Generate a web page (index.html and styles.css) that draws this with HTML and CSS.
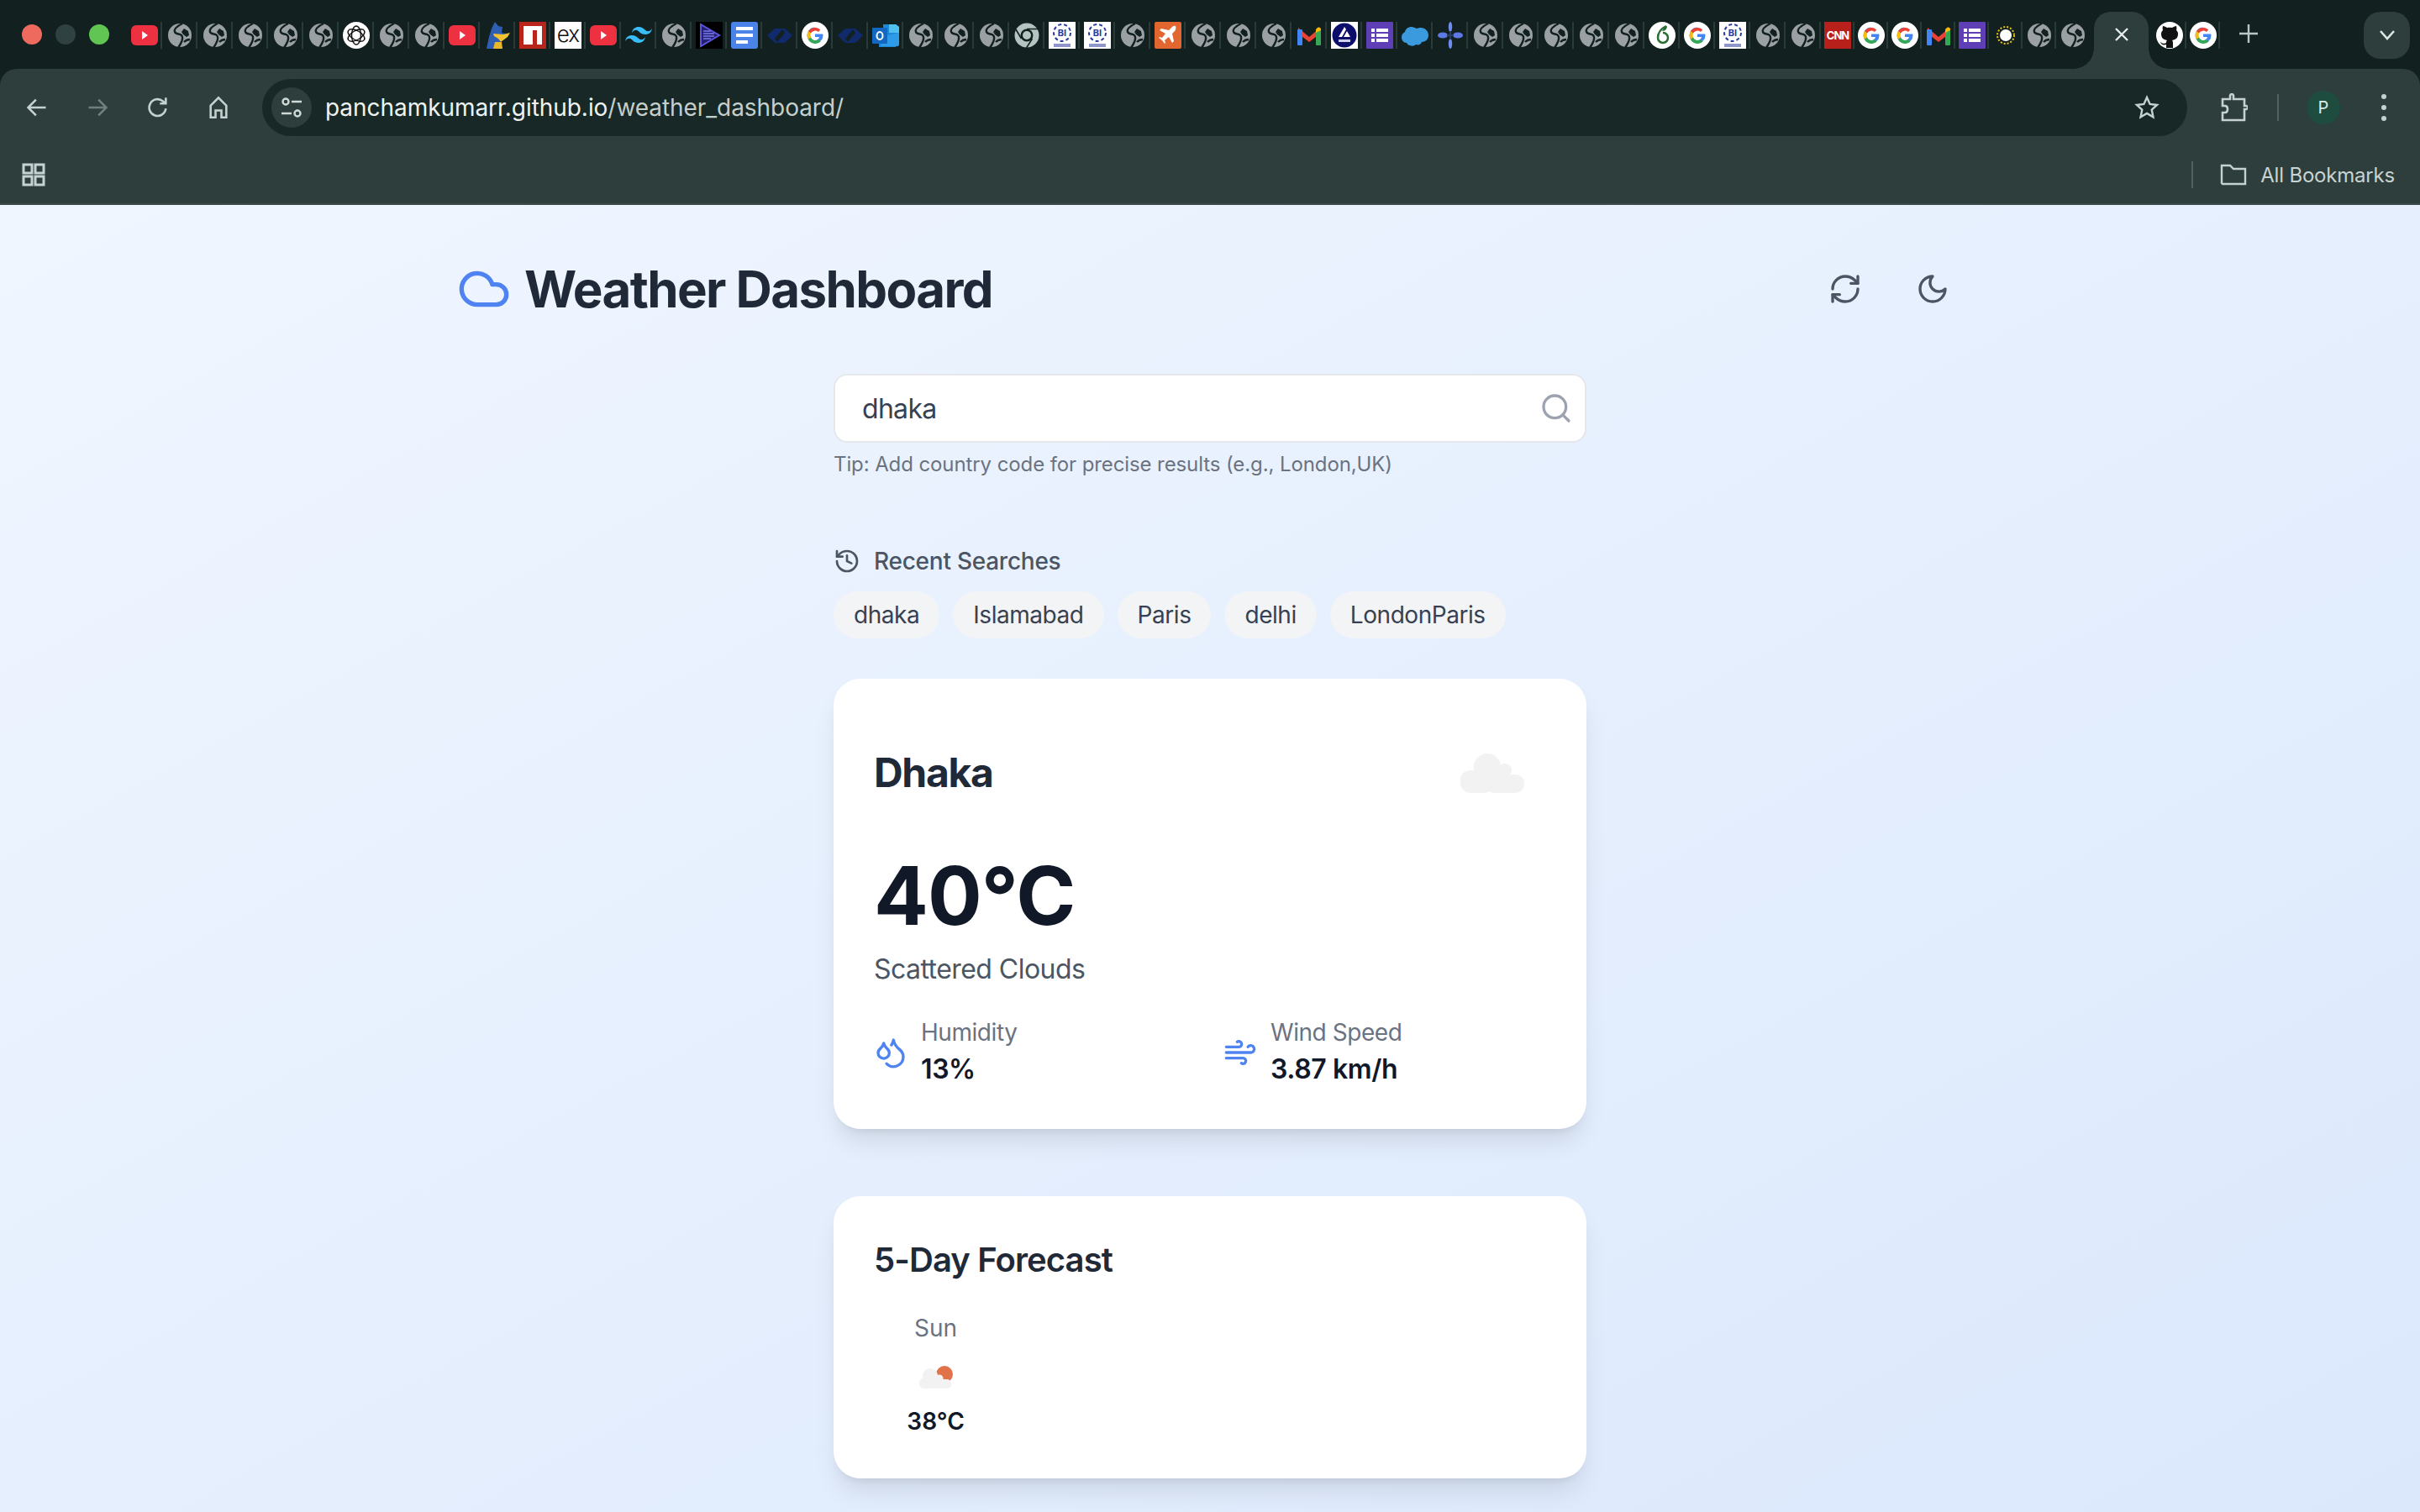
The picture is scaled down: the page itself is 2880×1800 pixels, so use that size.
FILE: index.html
```html
<!DOCTYPE html>
<html lang="en">
<head>
    <meta charset="UTF-8">
    <meta name="viewport" content="width=device-width, initial-scale=1.0">
    <title>Weather Dashboard</title>
    <link rel="stylesheet" href="styles.css">
</head>
<body>
    <svg class="defs" width="0" height="0">
        <symbol id="globe" viewBox="0 0 32 32"><circle cx="16" cy="16" r="14" fill="#9aa0a3"/><path d="M19 2C13 5 9 9 10 12c1 3 6 2 8 4 3 3 0 9-4 15" fill="none" stroke="#12211f" stroke-width="2.4"/><path d="M21 8l5 3 1 5-3 2-4-3-2-3z" fill="#12211f"/><path d="M21 24c2-2 4-3 7-3" fill="none" stroke="#12211f" stroke-width="2.4"/></symbol>
        <symbol id="yt" viewBox="0 0 32 32"><rect y="4" width="32" height="24" rx="6" fill="#ee3140"/><path d="M13 11l7 5-7 5z" fill="#fff"/></symbol>
        <symbol id="g" viewBox="0 0 32 32"><circle cx="16" cy="16" r="16" fill="#fff"/><path d="M25 14.500h-9V18h5c-.6 2.500-2.600 4-5 4a6 6 0 0 1-1-11.900V6.600A9.500 9.500 0 1 0 25.500 16c0-.5 0-1-.5-1.500z" fill="#4285f4"/><path d="M8 11a9.500 9.500 0 0 1 14.300-1.600l-2.500 2.500A6 6 0 0 0 11 13.500z" fill="#ea4335"/><path d="M8 11l3 2.500a6 6 0 0 0 0 5L8 21a9.500 9.500 0 0 1 0-10z" fill="#fbbc05"/><path d="M8 21l3-2.500a6 6 0 0 0 9 2.600l2.600 2.400A9.500 9.500 0 0 1 8 21z" fill="#34a853"/></symbol>
        <symbol id="bi" viewBox="0 0 32 32"><rect width="32" height="32" fill="#fff"/><circle cx="16" cy="13" r="10" fill="none" stroke="#2a3a9c" stroke-width="2" stroke-dasharray="4 3"/><text x="16" y="17" text-anchor="middle" font-size="11" font-weight="700" fill="#2a3a9c">BI</text><rect x="6" y="26" width="20" height="4" fill="#8f96c9"/></symbol>
        <symbol id="gmail" viewBox="0 0 32 32"><path d="M3 7l13 11L29 7v7L16 24 3 14z" fill="#ea4335"/><rect x="2" y="9" width="6" height="19" rx="1" fill="#4285f4"/><rect x="24" y="9" width="6" height="19" rx="1" fill="#34a853"/><path d="M24 13V9l2-2c2-1 4 0 4 2v1z" fill="#fbbc05"/></symbol>
        <symbol id="forms" viewBox="0 0 32 32"><rect width="32" height="32" rx="1" fill="#5f3fb5"/><g fill="#fff"><rect x="6" y="8" width="4" height="4"/><rect x="12" y="8" width="14" height="4"/><rect x="6" y="14" width="4" height="4"/><rect x="12" y="14" width="14" height="4"/><rect x="6" y="20" width="4" height="4"/><rect x="12" y="20" width="14" height="4"/></g></symbol>
        <symbol id="navy" viewBox="0 0 32 32"><path d="M1 16l9-8h10L10 20l4 5h-4z" fill="#102a6b"/><path d="M31 16l-9 9H12l10-12-4-5h4z" fill="#102a6b"/></symbol>
    </svg>

    <header class="browser">
        <div class="tabstrip">
            <div class="lights"><span class="light red"></span><span class="light off"></span><span class="light green"></span></div>
            <div class="tab"><svg class="fav"><use href="#yt"/></svg></div>
            <div class="tab"><svg class="fav"><use href="#globe"/></svg></div>
            <div class="tab"><svg class="fav"><use href="#globe"/></svg></div>
            <div class="tab"><svg class="fav"><use href="#globe"/></svg></div>
            <div class="tab"><svg class="fav"><use href="#globe"/></svg></div>
            <div class="tab"><svg class="fav"><use href="#globe"/></svg></div>
            <div class="tab"><svg class="fav" viewBox="0 0 32 32"><circle cx="16" cy="16" r="16" fill="#fff"/><g fill="none" stroke="#111" stroke-width="1.4"><ellipse cx="16" cy="16" rx="5.5" ry="11"/><ellipse cx="16" cy="16" rx="5.5" ry="11" transform="rotate(60 16 16)"/><ellipse cx="16" cy="16" rx="5.5" ry="11" transform="rotate(120 16 16)"/></g></svg></div>
            <div class="tab"><svg class="fav"><use href="#globe"/></svg></div>
            <div class="tab"><svg class="fav"><use href="#globe"/></svg></div>
            <div class="tab"><svg class="fav"><use href="#yt"/></svg></div>
            <div class="tab"><svg class="fav" viewBox="0 0 32 32"><path d="M13 0l4 5 5 1-1 7 5 1-1 6-6 3 3 9H3l3-14 3-10z" fill="#2f5fb3"/><path d="M11 14l12 1 8-2-3 5-8 6-3-4-5-3z" fill="#f2c230"/><path d="M13 24h8l1 8H11z" fill="#e9b82a"/></svg></div>
            <div class="tab"><svg class="fav" viewBox="0 0 32 32"><rect width="32" height="32" fill="#b8251c"/><path d="M5 5h22v22h-6V10h-5v17H5z" fill="#fff"/></svg></div>
            <div class="tab"><span class="fav tile ex">ex</span></div>
            <div class="tab"><svg class="fav"><use href="#yt"/></svg></div>
            <div class="tab"><svg class="fav" viewBox="0 0 32 32"><path d="M8 13c1-5 4-7 8-7 6 0 7 4 10 5 2 .5 4 0 6-3-1 5-4 7-8 7-6 0-7-4-10-5-2-.5-4 0-6 3zM0 23c1-5 4-7 8-7 6 0 7 4 10 5 2 .5 4 0 6-3-1 5-4 7-8 7-6 0-7-4-10-5-2-.5-4 0-6 3z" fill="#38bdf8"/></svg></div>
            <div class="tab"><svg class="fav"><use href="#globe"/></svg></div>
            <div class="tab"><svg class="fav" viewBox="0 0 32 32"><rect width="32" height="32" fill="#000"/><path d="M6 3l22 13L6 29z" fill="#22226e" stroke="#5b55e0" stroke-width="2"/><path d="M9 11h9M9 14h13M9 17h13M9 20h9" stroke="#7d78f0" stroke-width="1.5"/></svg></div>
            <div class="tab"><svg class="fav" viewBox="0 0 32 32"><rect width="32" height="32" rx="3" fill="#4b83e8"/><g fill="#fff"><rect x="6" y="6" width="20" height="4"/><rect x="6" y="14" width="20" height="4"/><rect x="6" y="22" width="14" height="4"/></g></svg></div>
            <div class="tab"><svg class="fav"><use href="#navy"/></svg></div>
            <div class="tab"><svg class="fav"><use href="#g"/></svg></div>
            <div class="tab"><svg class="fav"><use href="#navy"/></svg></div>
            <div class="tab"><svg class="fav" viewBox="0 0 32 32"><path d="M13 3h15l4 3v14l-4 10H8v-8h5z" fill="#1e88d8"/><path d="M20 3h8l4 3v7H20z" fill="#50c0f0"/><path d="M14 17l18-4v14a2 2 0 0 1-2 2H10z" fill="#2d9be8"/><rect y="7" width="18" height="19" rx="1" fill="#1368c4"/><ellipse cx="9" cy="16.500" rx="3.500" ry="4.500" fill="none" stroke="#fff" stroke-width="2"/></svg></div>
            <div class="tab"><svg class="fav"><use href="#globe"/></svg></div>
            <div class="tab"><svg class="fav"><use href="#globe"/></svg></div>
            <div class="tab"><svg class="fav"><use href="#globe"/></svg></div>
            <div class="tab"><svg class="fav" viewBox="0 0 32 32"><circle cx="16" cy="16" r="14.5" fill="#b4c4c0"/><circle cx="16" cy="16" r="7.500" fill="#12211f"/><circle cx="16" cy="16" r="5" fill="#b4c4c0"/><path d="M16 8.500h14M9.500 20L3 9M22.500 20l-7 11" stroke="#12211f" stroke-width="1.6"/></svg></div>
            <div class="tab"><svg class="fav"><use href="#bi"/></svg></div>
            <div class="tab"><svg class="fav"><use href="#bi"/></svg></div>
            <div class="tab"><svg class="fav"><use href="#globe"/></svg></div>
            <div class="tab"><svg class="fav" viewBox="0 0 32 32"><rect width="32" height="32" rx="2" fill="#e2662f"/><path d="M25 5c-2-1-4 1-5 2l-3 3-9-2-2 2 7 4-4 5-3-1-1 1 4 3 3 4 1-1-1-3 5-4 4 7 2-2-2-9 3-3c1-1 2-4 1-6z" fill="#fff"/></svg></div>
            <div class="tab"><svg class="fav"><use href="#globe"/></svg></div>
            <div class="tab"><svg class="fav"><use href="#globe"/></svg></div>
            <div class="tab"><svg class="fav"><use href="#globe"/></svg></div>
            <div class="tab"><svg class="fav"><use href="#gmail"/></svg></div>
            <div class="tab"><svg class="fav" viewBox="0 0 32 32"><rect width="32" height="32" fill="#fff"/><circle cx="16" cy="16" r="14.5" fill="#0d0d6b"/><path d="M9 18L16 6l2 3-5 9zM15 18l4-7 4 7z" fill="#fff"/><rect x="9" y="21" width="14" height="3" fill="#cfd0ea"/></svg></div>
            <div class="tab"><svg class="fav"><use href="#forms"/></svg></div>
            <div class="tab"><svg class="fav" viewBox="0 0 32 32"><path d="M6 25c-4 0-6-3-6-7 0-3 2-5 4-6 1-4 4-6 8-6 2 0 4 1 6 2 2-1 3-1 5-1 5 0 9 4 9 9s-4 8-8 8c-1 3-4 4-7 3-2 2-5 2-7 1-2 0-3-1-4-3z" fill="#3b9ade"/></svg></div>
            <div class="tab"><svg class="fav" viewBox="0 0 32 32"><ellipse cx="16" cy="6" rx="2.200" ry="6" fill="#6f8cf0"/><ellipse cx="16" cy="26" rx="2.200" ry="6" fill="#6f8cf0"/><ellipse cx="7" cy="16" rx="6" ry="3.600" fill="#5d79e6"/><ellipse cx="25" cy="16" rx="6" ry="3.600" fill="#5d79e6"/><path d="M16 11v10M12 16h8" stroke="#2b3f66" stroke-width="2"/></svg></div>
            <div class="tab"><svg class="fav"><use href="#globe"/></svg></div>
            <div class="tab"><svg class="fav"><use href="#globe"/></svg></div>
            <div class="tab"><svg class="fav"><use href="#globe"/></svg></div>
            <div class="tab"><svg class="fav"><use href="#globe"/></svg></div>
            <div class="tab"><svg class="fav"><use href="#globe"/></svg></div>
            <div class="tab"><svg class="fav" viewBox="0 0 32 32"><circle cx="16" cy="16" r="16" fill="#fff"/><path d="M21 5c-6 3-10 8-10 14a6 6 0 1 0 6-6" fill="none" stroke="#2b6e34" stroke-width="2.500"/><path d="M16 11c1-3 3-5 6-6 0 3-2 6-6 6z" fill="#2b6e34"/></svg></div>
            <div class="tab"><svg class="fav"><use href="#g"/></svg></div>
            <div class="tab"><svg class="fav"><use href="#bi"/></svg></div>
            <div class="tab"><svg class="fav"><use href="#globe"/></svg></div>
            <div class="tab"><svg class="fav"><use href="#globe"/></svg></div>
            <div class="tab narrow"><span class="fav tile cnn">CNN</span></div>
            <div class="tab narrow"><svg class="fav"><use href="#g"/></svg></div>
            <div class="tab narrow"><svg class="fav"><use href="#g"/></svg></div>
            <div class="tab narrow"><svg class="fav"><use href="#gmail"/></svg></div>
            <div class="tab narrow"><svg class="fav"><use href="#forms"/></svg></div>
            <div class="tab narrow"><svg class="fav" viewBox="0 0 32 32"><circle cx="16" cy="16" r="7" fill="#fff"/><circle cx="16" cy="16" r="10" fill="none" stroke="#f0c419" stroke-width="2" stroke-dasharray="2 2"/></svg></div>
            <div class="tab narrow"><svg class="fav"><use href="#globe"/></svg></div>
            <div class="tab narrow last"><svg class="fav"><use href="#globe"/></svg></div>
            <div class="tab-active">
                <svg class="close" width="20" height="20" viewBox="0 0 20 20"><path d="M3 3l14 14M17 3L3 17" stroke="#e6eeec" stroke-width="2.400"/></svg>
            </div>
            <div class="tab after-active"><svg class="fav" viewBox="0 0 32 32"><circle cx="16" cy="16" r="16" fill="#fff"/><path d="M12 31v-4c-4 1-6 0-7-3 2 1 3 3 7 1 0-1 0-2 1-3-5-1-7-3-7-8 0-2 1-3 2-4-.5-1.500-.5-3 0-5 2 0 3 1 5 2 2-.5 4-.5 6 0 2-1 3-2 5-2 .5 2 .5 3.500 0 5 1 1 2 2 2 4 0 5-2 7-7 8 1 1 1 2 1 4v5z" fill="#111"/></svg></div>
            <div class="tab narrow"><svg class="fav"><use href="#g"/></svg></div>
            <svg class="new-tab" width="24" height="24" viewBox="0 0 24 24"><path d="M12 1v22M1 12h22" stroke="#b9c8c4" stroke-width="2.400"/></svg>
            <div class="tab-search">
                <svg width="20" height="14" viewBox="0 0 20 14"><path d="M2 2l8 9 8-9" fill="none" stroke="#dbe5e2" stroke-width="2.600"/></svg>
            </div>
        </div>

        <div class="toolbar">
            <svg class="nav-icon" viewBox="0 0 24 24"><path d="M21 12H4M11 4l-8 8 8 8"/></svg>
            <svg class="nav-icon dim" viewBox="0 0 24 24"><path d="M3 12h17M13 4l8 8-8 8"/></svg>
            <svg class="nav-icon" viewBox="0 0 24 24"><path d="M20 13a8.500 8.500 0 1 1-3-7.500L20 8M20 2v6h-6"/></svg>
            <svg class="nav-icon" viewBox="0 0 24 24"><path d="M4 22V10l8-8 8 8v12h-5v-7H9v7z"/></svg>
            <div class="omnibox">
                <span class="site-info">
                    <svg width="26" height="26" viewBox="0 0 26 26" fill="none" stroke="#cfdad7" stroke-width="2.400"><circle cx="6" cy="6" r="3.500"/><path d="M13 6h12M1 20h12"/><circle cx="20" cy="20" r="3.500"/></svg>
                </span>
                <span class="url"><span class="url-host">panchamkumarr.github.io</span>/weather_dashboard/</span>
                <svg class="star" width="32" height="32" viewBox="0 0 24 24"><path d="M12 3l2.700 6 6.300.7-4.700 4.300 1.300 6.500L12 17.200 6.400 20.500 7.700 14 3 9.700 9.300 9z"/></svg>
            </div>
            <svg class="ext" width="34" height="34" viewBox="0 0 34 34"><path d="M4 7h9V3c0-1 1-2 2-2s2 1 2 2v4h13v8h2c1 0 2 1 2 2s-1 2-2 2h-2v13H4V23h3c2 0 3-1.500 3-4s-1-4-3-4H4z"/></svg>
            <span class="tool-sep"></span>
            <span class="avatar">P</span>
            <span class="menu-dots"><i></i><i></i><i></i></span>
        </div>

        <div class="bookmarks">
            <svg class="apps" width="28" height="28" viewBox="0 0 28 28"><path d="M2 2h10v10H2zM16 2h10v10H16zM2 16h10v10H2zM16 16h10v10H16z"/></svg>
            <span class="bar-sep"></span>
            <svg class="folder" width="32" height="26" viewBox="0 0 32 26"><path d="M2 23V2h10l4 4h14v18H3z"/></svg>
            <span class="bm-label">All Bookmarks</span>
        </div>
    </header>

    <main class="page">
        <div class="container">
            <div class="head">
                <h1 class="title">
                    <svg class="title-icon lucide" width="64" height="64" viewBox="0 0 24 24"><path d="M17.500 19H9a7 7 0 1 1 6.710-9h1.790a4.500 4.500 0 1 1 0 9Z"/></svg>
                    Weather Dashboard
                </h1>
                <div class="head-btns">
                    <button class="icon-btn"><svg class="lucide" width="40" height="40" viewBox="0 0 24 24"><path d="M3 12a9 9 0 0 1 9-9 9.750 9.750 0 0 1 6.740 2.740L21 8"/><path d="M21 3v5h-5"/><path d="M21 12a9 9 0 0 1-9 9 9.750 9.750 0 0 1-6.740-2.740L3 16"/><path d="M8 16H3v5"/></svg></button>
                    <button class="icon-btn"><svg class="lucide" width="40" height="40" viewBox="0 0 24 24"><path d="M12 3a6 6 0 0 0 9 9 9 9 0 1 1-9-9Z"/></svg></button>
                </div>
            </div>

            <div class="column">
                <div class="search-box">
                    <span class="search-text">dhaka</span>
                    <svg class="search-icon lucide" width="40" height="40" viewBox="0 0 24 24"><circle cx="11" cy="11" r="8"/><path d="m21 21-4.300-4.300"/></svg>
                </div>
                <p class="tip">Tip: Add country code for precise results (e.g., London,UK)</p>

                <div class="recent-head">
                    <svg class="lucide" width="32" height="32" viewBox="0 0 24 24"><path d="M3 12a9 9 0 1 0 9-9 9.750 9.750 0 0 0-6.740 2.740L3 8"/><path d="M3 3v5h5"/><path d="M12 7v5l4 2"/></svg>
                    <span>Recent Searches</span>
                </div>
                <div class="chips">
                    <span class="chip">dhaka</span>
                    <span class="chip">Islamabad</span>
                    <span class="chip">Paris</span>
                    <span class="chip">delhi</span>
                    <span class="chip">LondonParis</span>
                </div>

                <section class="card current">
                    <div class="city-row">
                        <h2 class="city">Dhaka</h2>
                        <svg class="weather-img" width="76" height="47" viewBox="0 0 76 47"><g fill="#f2f2f2"><circle cx="32" cy="16" r="16"/><circle cx="53" cy="20" r="8"/><rect y="20" width="40" height="27" rx="12"/><rect x="30" y="25" width="46" height="22" rx="10"/></g></svg>
                    </div>
                    <div class="temp">40°C</div>
                    <div class="desc">Scattered Clouds</div>
                    <div class="stats">
                        <div class="stat">
                            <svg class="lucide stat-icon" width="40" height="40" viewBox="0 0 24 24"><path d="M7 16.300c2.200 0 4-1.830 4-4.050 0-1.160-.57-2.260-1.710-3.190S7.290 6.750 7 5.300c-.29 1.450-1.140 2.840-2.290 3.760S3 11.100 3 12.250c0 2.220 1.800 4.050 4 4.050z"/><path d="M12.560 6.600A10.970 10.970 0 0 0 14 3.020c.5 2.500 2 4.900 4 6.500s3 3.500 3 5.500a6.980 6.980 0 0 1-11.910 4.970"/></svg>
                            <div>
                                <div class="stat-label">Humidity</div>
                                <div class="stat-value">13%</div>
                            </div>
                        </div>
                        <div class="stat">
                            <svg class="lucide stat-icon" width="40" height="40" viewBox="0 0 24 24"><path d="M12.800 19.600A2 2 0 1 0 14 16H2"/><path d="M17.500 8a2.500 2.500 0 1 1 2 4H2"/><path d="M9.800 4.400A2 2 0 1 1 11 8H2"/></svg>
                            <div>
                                <div class="stat-label">Wind Speed</div>
                                <div class="stat-value">3.87 km/h</div>
                            </div>
                        </div>
                    </div>
                </section>

                <section class="card forecast">
                    <h3 class="forecast-title">5-Day Forecast</h3>
                    <div class="forecast-grid">
                        <div class="day">
                            <div class="day-name">Sun</div>
                            <svg class="day-img" width="40" height="27" viewBox="0 0 40 27"><circle cx="30" cy="10" r="10" fill="#e0734a"/><g fill="#f2f2f2"><circle cx="13" cy="12" r="9"/><circle cx="24" cy="15" r="4.500"/><rect y="14" width="20" height="13" rx="6"/><rect x="14" y="16" width="24" height="11" rx="5"/></g></svg>
                            <div class="day-temp">38°C</div>
                        </div>
                    </div>
                </section>
            </div>
        </div>
    </main>
</body>
</html>
```

FILE: styles.css
```css
* {
    box-sizing: border-box;
}
html, body {
    margin: 0;
    height: 100%;
}
body {
    font-family: Inter, 'Liberation Sans', sans-serif;
    display: flex;
    flex-direction: column;
    height: 1800px;
    overflow: hidden;
    background-color: #12211f;
}
.defs {
    display: none;
}

/* browser chrome */
.browser {
    flex: none;
    height: 244px;
    background-color: #12211f;
}
.tabstrip {
    height: 82px;
    display: flex;
    align-items: flex-start;
    padding-top: 26px;
}
.lights {
    width: 151px;
    display: flex;
    gap: 16px;
    padding: 3px 0 0 26px;
    flex: none;
}
.light {
    width: 24px;
    height: 24px;
    border-radius: 50%;
}
.light.red { background-color: #ee6a5f; }
.light.off { background-color: #2f4140; }
.light.green { background-color: #61c554; }
.tab {
    width: 42px;
    height: 32px;
    display: flex;
    align-items: center;
    padding-left: 5px;
    border-right: 2px solid #2a3a38;
    flex: none;
}
.tab.narrow {
    width: 40px;
    padding-left: 4px;
}
.tab.last {
    border-right: none;
}
.fav {
    width: 32px;
    height: 32px;
    flex: none;
    display: block;
}
.tile {
    display: flex;
    align-items: center;
    justify-content: center;
}
.ex {
    background-color: #fff;
    color: #111;
    font-size: 26px;
    font-weight: 300;
    line-height: 26px;
    letter-spacing: -1px;
    padding-bottom: 3px;
}
.cnn {
    background-color: #b8201c;
    color: #fff;
    font-size: 13px;
    font-weight: 700;
    letter-spacing: -1px;
}
.tab-active {
    position: relative;
    flex: none;
    width: 65px;
    height: 68px;
    margin-top: -12px;
    margin-left: 5px;
    background-color: #2d3e3c;
    border-radius: 20px 20px 0 0;
    display: flex;
    justify-content: center;
    padding-top: 17px;
}
.close {
    display: block;
}
.tab-active::before,
.tab-active::after {
    content: '';
    position: absolute;
    bottom: 0;
    width: 24px;
    height: 24px;
}
.tab-active::before {
    left: -24px;
    background: radial-gradient(circle at 0 0, transparent 23.5px, #2d3e3c 24px);
}
.tab-active::after {
    right: -24px;
    background: radial-gradient(circle at 100% 0, transparent 23.5px, #2d3e3c 24px);
}
.tab.after-active {
    margin-left: 4px;
    width: 41px;
}
.new-tab {
    flex: none;
    margin: 2px 0 0 22px;
}
.tab-search {
    flex: none;
    width: 55px;
    height: 56px;
    margin: -12px 12px 0 auto;
    background-color: #2d3e3c;
    border-radius: 20px;
    display: flex;
    align-items: center;
    justify-content: center;
}

.toolbar {
    height: 92px;
    background-color: #2d3e3c;
    border-radius: 20px 20px 0 0;
    display: flex;
    align-items: center;
    padding-left: 30px;
}
.nav-icon {
    width: 28px;
    height: 28px;
    flex: none;
    fill: none;
    stroke: #c5d2cf;
    stroke-width: 2.2;
    margin-right: 44px;
}
.nav-icon.dim {
    stroke: #6f7f7c;
}
.omnibox {
    flex: none;
    width: 2291px;
    height: 68px;
    margin-left: -6px;
    background-color: #172826;
    border-radius: 34px;
    display: flex;
    align-items: center;
    padding: 0 32px 0 11px;
}
.site-info {
    width: 48px;
    height: 48px;
    border-radius: 50%;
    background-color: #2d3e3c;
    display: flex;
    align-items: center;
    justify-content: center;
    flex: none;
}
.url {
    margin-left: 16px;
    font-size: 28px;
    letter-spacing: -0.05px;
    color: #c4cfcd;
    flex: 1;
    white-space: nowrap;
}
.url-host {
    color: #eef3f2;
}
.star {
    fill: none;
    stroke: #c5d2cf;
    stroke-width: 1.8;
    flex: none;
}
.ext {
    flex: none;
    margin-left: 38px;
    fill: none;
    stroke: #c5d2cf;
    stroke-width: 2.6;
}
.tool-sep {
    width: 2px;
    height: 32px;
    background-color: #52625f;
    margin-left: 35px;
    flex: none;
}
.avatar {
    width: 40px;
    height: 40px;
    border-radius: 50%;
    background-color: #1e4d40;
    color: #d7ece4;
    font-size: 20px;
    display: flex;
    align-items: center;
    justify-content: center;
    margin-left: 33px;
    flex: none;
}
.menu-dots {
    margin-left: 49px;
    display: flex;
    flex-direction: column;
    gap: 7px;
    flex: none;
}
.menu-dots i {
    display: block;
    width: 6px;
    height: 6px;
    border-radius: 50%;
    background-color: #c5d2cf;
}

.bookmarks {
    height: 70px;
    background-color: #2d3e3c;
    border-bottom: 2px solid #3c4a49;
    display: flex;
    align-items: center;
    padding-left: 26px;
}
.apps {
    fill: none;
    stroke: #c5d2cf;
    stroke-width: 3;
    flex: none;
}
.bar-sep {
    width: 2px;
    height: 32px;
    background-color: #52625f;
    margin-left: auto;
    flex: none;
}
.folder {
    fill: none;
    stroke: #c5d2cf;
    stroke-width: 2.4;
    margin-left: 32px;
    flex: none;
}
.bm-label {
    margin: 0 30px 0 16px;
    font-size: 24px;
    letter-spacing: -0.2px;
    color: #c9d3d1;
    white-space: nowrap;
}

/* page */
.page {
    flex: 1;
    min-height: 0;
    background: linear-gradient(to bottom right, #f0f6ff, #dbe8fc);
}
.container {
    width: 1792px;
    margin: 0 auto;
    padding-top: 64px;
}
.lucide {
    fill: none;
    stroke: currentColor;
    stroke-width: 2;
    stroke-linecap: round;
    stroke-linejoin: round;
    flex: none;
}
.head {
    display: flex;
    justify-content: space-between;
    align-items: center;
    height: 72px;
    margin-bottom: 65px;
}
.title {
    margin: 0;
    display: flex;
    align-items: center;
    gap: 16px;
    font-size: 60px;
    line-height: 72px;
    font-weight: 700;
    letter-spacing: -1.6px;
    color: #1f2937;
}
.title-icon {
    color: #4f83f1;
}
.head-btns {
    display: flex;
    gap: 32px;
}
.icon-btn {
    padding: 16px;
    border: none;
    background: none;
    color: #4b5563;
    display: flex;
}
.column {
    width: 896px;
    margin: 0 auto;
}
.search-box {
    height: 82px;
    background-color: #fff;
    border: 2px solid #e5e7eb;
    border-radius: 16px;
    display: flex;
    align-items: center;
    justify-content: space-between;
    padding: 0 14px 0 32px;
}
.search-text {
    font-size: 32px;
    letter-spacing: -0.7px;
    color: #374151;
}
.search-icon {
    color: #9ca3af;
}
.tip {
    margin: 10px 0 0;
    font-size: 24px;
    line-height: 32px;
    letter-spacing: -0.1px;
    color: #6b7280;
}
.recent-head {
    margin-top: 79px;
    display: flex;
    align-items: center;
    gap: 16px;
    font-size: 28px;
    line-height: 40px;
    font-weight: 500;
    letter-spacing: -0.25px;
    color: #4b5563;
}
.chips {
    margin-top: 16px;
    display: flex;
    gap: 16px;
}
.chip {
    padding: 8px 24px;
    font-size: 28px;
    line-height: 40px;
    letter-spacing: -0.45px;
    color: #374151;
    background-color: #f3f4f6;
    border-radius: 9999px;
}
.card {
    background-color: #fff;
    border-radius: 32px;
    padding: 48px;
    box-shadow: 0 20px 30px -6px rgba(0, 0, 0, 0.1), 0 8px 12px -8px rgba(0, 0, 0, 0.1);
}
.current {
    margin-top: 48px;
    height: 536px;
}
.city-row {
    display: flex;
    justify-content: space-between;
    align-items: center;
    height: 128px;
    padding-right: 26px;
}
.city {
    margin: 0;
    font-size: 48px;
    line-height: 64px;
    font-weight: 700;
    letter-spacing: -1.3px;
    color: #1f2937;
}
.temp {
    margin-top: 24px;
    font-size: 96px;
    line-height: 116px;
    font-weight: 700;
    letter-spacing: -1px;
    color: #111827;
}
.desc {
    margin-top: 6px;
    font-size: 32px;
    line-height: 48px;
    letter-spacing: -0.55px;
    color: #4b5563;
}
.stats {
    margin-top: 31px;
    display: grid;
    grid-template-columns: 1fr 1fr;
    gap: 32px;
}
.stat {
    display: flex;
    align-items: center;
    gap: 16px;
}
.stat-icon {
    color: #4f83f1;
}
.stat-label {
    font-size: 28px;
    line-height: 40px;
    letter-spacing: -0.45px;
    color: #6b7280;
}
.stat-value {
    font-size: 32px;
    line-height: 48px;
    font-weight: 600;
    letter-spacing: -0.4px;
    color: #111827;
}
.forecast {
    margin-top: 80px;
    height: 336px;
}
.forecast-title {
    margin: 0;
    font-size: 40px;
    line-height: 56px;
    font-weight: 600;
    letter-spacing: -0.9px;
    color: #1f2937;
}
.forecast-grid {
    margin-top: 33px;
    display: grid;
    grid-template-columns: repeat(5, 1fr);
    gap: 16px;
}
.day {
    display: flex;
    flex-direction: column;
    align-items: center;
}
.day-name {
    font-size: 28px;
    line-height: 40px;
    color: #6b7280;
}
.day-img {
    margin-top: 25px;
}
.day-temp {
    margin-top: 19px;
    font-size: 28px;
    line-height: 40px;
    font-weight: 600;
    color: #111827;
}
```
